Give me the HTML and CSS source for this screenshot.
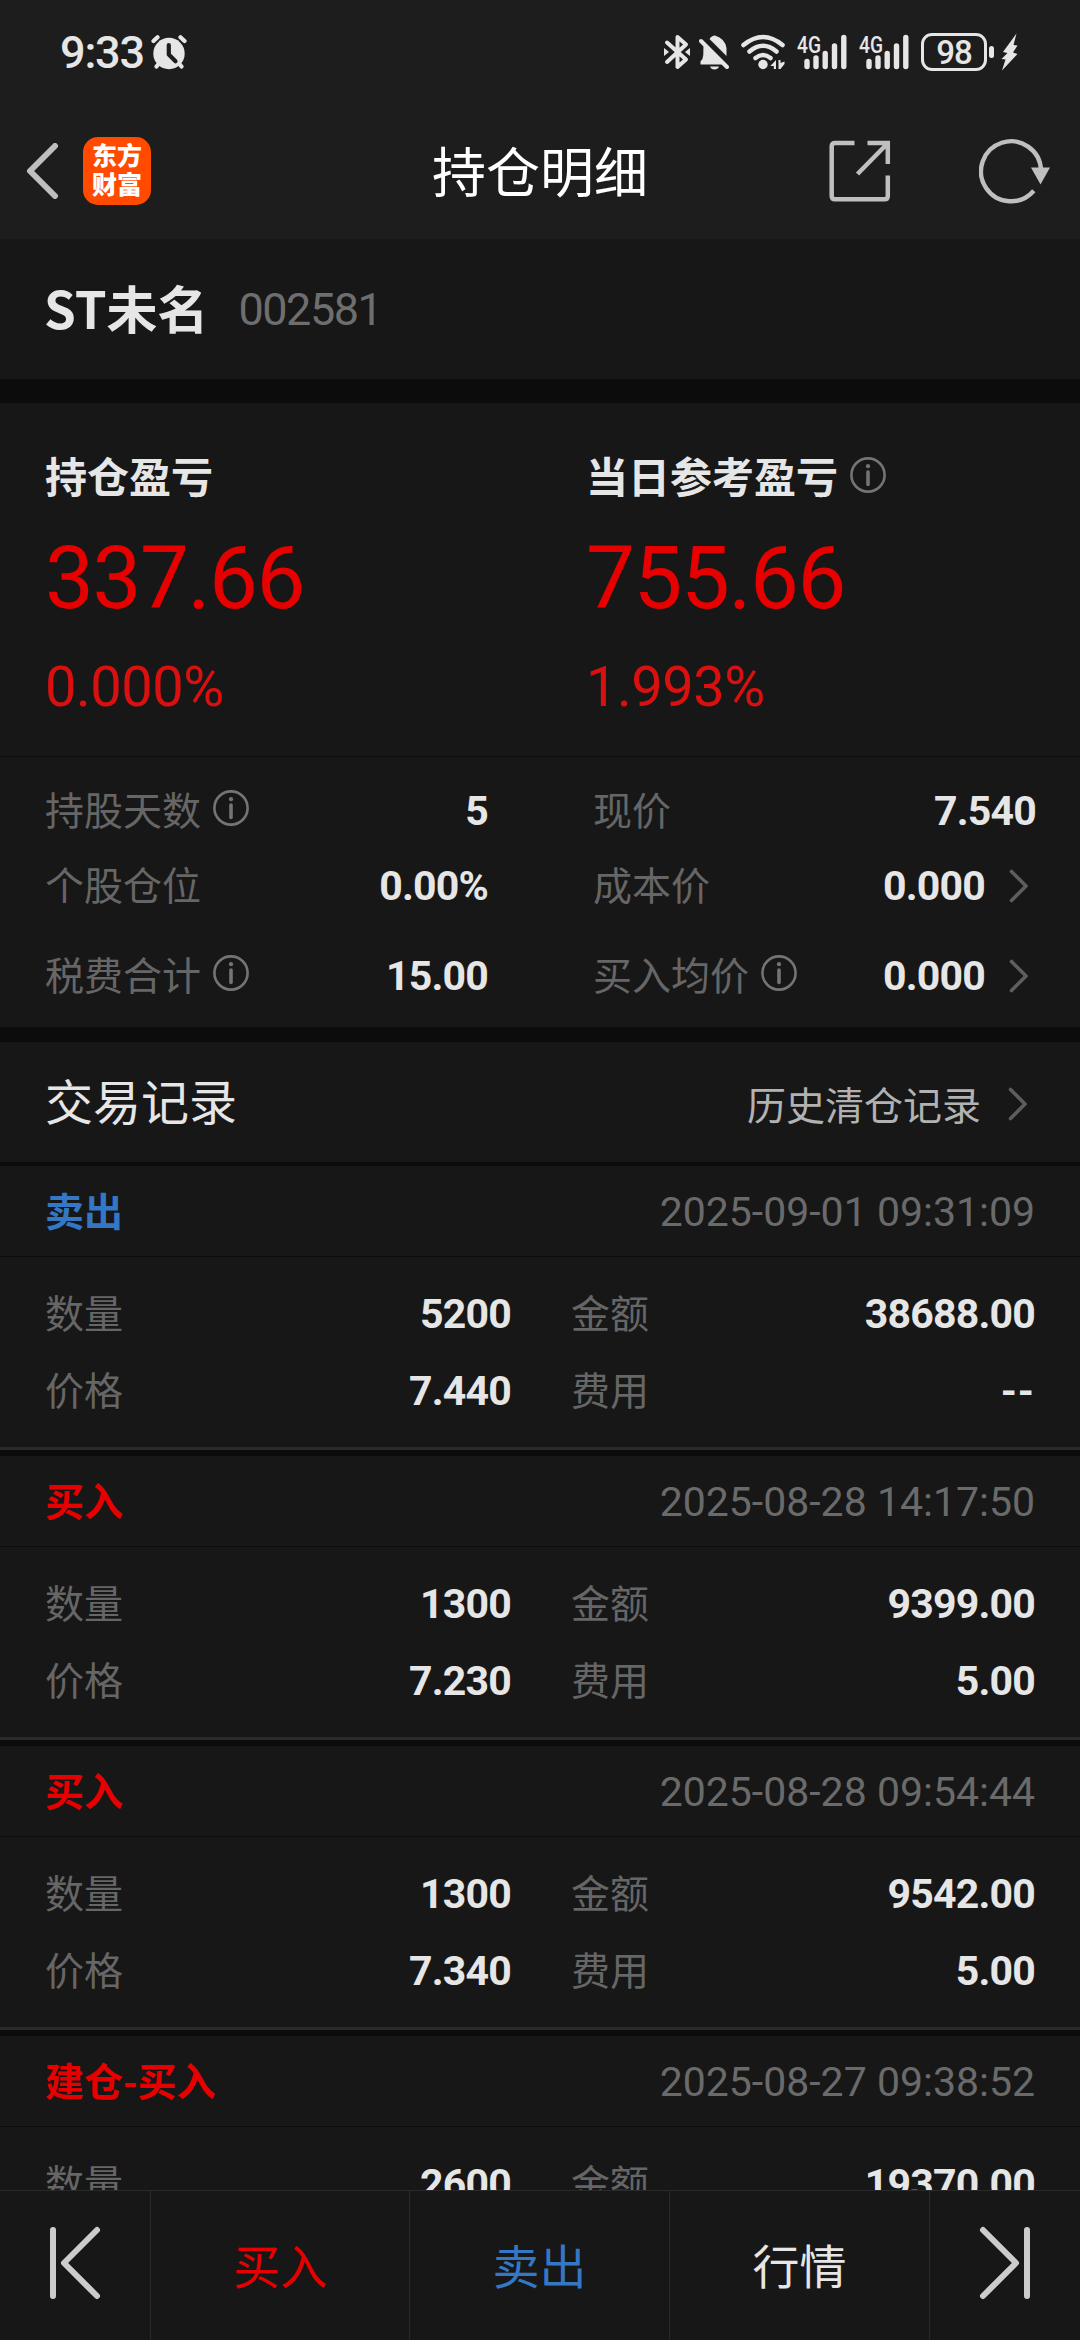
FILE: index.html
```html
<!DOCTYPE html>
<html lang="zh-CN">
<head>
  <meta charset="UTF-8">
  <meta name="viewport" content="width=device-width, initial-scale=1.0">
  <title>持仓明细</title>
  <link rel="stylesheet" href="styles.css">
</head>
<body>
  <!-- shared icons -->
  <svg class="defs" width="0" height="0">
    <symbol id="info" viewBox="0 0 36 36">
      <circle cx="18" cy="18" r="16.6" fill="none" stroke="currentColor" stroke-width="2.6"/>
      <circle cx="18" cy="9.2" r="2.1" fill="currentColor"/>
      <path d="M18 15v12.5" stroke="currentColor" stroke-width="3.6" stroke-linecap="round"/>
    </symbol>
    <symbol id="arrow" viewBox="0 0 20 34">
      <path d="M2.5 2.5L17 17L2.5 31.5" fill="none" stroke="currentColor" stroke-width="3.6" stroke-linecap="round" stroke-linejoin="round"/>
    </symbol>
  </svg>

  <div class="page">
    <div class="statusbar">
      <span class="time">9:33</span>
      <svg class="alarm" width="36" height="36" viewBox="0 0 36 36">
        <g stroke="currentColor" stroke-width="4.2" stroke-linecap="round">
          <path d="M2.5 7L6.5 3.2M33.5 7L29.5 3.2M5.5 32.5L10 27M30.5 32.5L26 27"/>
        </g>
        <circle cx="18" cy="19.5" r="15.7" fill="currentColor"/>
        <path d="M17.8 11v9.5l6.7 6.7" class="cut" stroke-width="4.2"/>
      </svg>
      <div class="status-icons">
        <svg class="bluetooth" width="26" height="36" viewBox="0 0 26 36">
          <path d="M3 8.5L22 25.5L13.500 33V3L22 10.5L3 28" fill="none" stroke="currentColor" stroke-width="4" stroke-linejoin="round" stroke-linecap="round"/>
          <path d="M0 14l5 4l-5 4zM26 14l-5 4l5 4z" fill="currentColor"/>
        </svg>
        <svg class="bell" width="30" height="36" viewBox="0 0 30 36">
          <path d="M4.500 9L25.500 30.500H1.500V27.500Q4 25.500 4.300 21zM10.500 5Q12.500 1.500 16 1.500Q26 4.500 27.500 14V22zM11 32.500h9q-1 3-4.500 3t-4.500-3z" fill="currentColor"/>
          <path d="M2 7L28 33" stroke="currentColor" stroke-width="4" stroke-linecap="round"/>
          <path d="M7 6L30 29" stroke="#1d1d1d" stroke-width="2"/>
        </svg>
        <svg class="wifi" width="44" height="36" viewBox="0 0 44 36">
          <path d="M2.5 11Q22 -5 41.500 11M8.5 17.500Q22 6 35.500 17.500M14.500 24Q22 18 29.500 24" fill="none" stroke="currentColor" stroke-width="4.5" stroke-linecap="round"/>
          <circle cx="22" cy="30.500" r="4.7" fill="currentColor"/>
          <path d="M35 26v9h-2.200v-3h-3.500zM37.500 26h2v3l4-1.500v2.500l-4 5h-2z" fill="currentColor"/>
        </svg>
        <svg class="signal" width="50" height="36" viewBox="0 0 50 36">
          <text x="0" y="18.500" textLength="24" lengthAdjust="spacingAndGlyphs">4G</text>
          <path d="M10 27.500v5M19 24v8.500M28.200 19.500v13M37.500 12v20.500M46.800 3.500v29" stroke="currentColor" stroke-width="5.4" stroke-linecap="round"/>
        </svg>
        <svg class="signal" width="50" height="36" viewBox="0 0 50 36">
          <text x="0" y="18.500" textLength="24" lengthAdjust="spacingAndGlyphs">4G</text>
          <path d="M10 27.500v5M19 24v8.500M28.200 19.500v13M37.500 12v20.500M46.800 3.500v29" stroke="currentColor" stroke-width="5.4" stroke-linecap="round"/>
        </svg>
        <div class="battery">98</div>
        <i class="battery-cap"></i>
        <svg class="bolt" width="17" height="38" viewBox="0 0 17 38">
          <path d="M15.500 0.500L2 19L6.500 20L0.500 26L4.500 26.500L1 37.500L16.500 21L12 19.500L16.500 12.500L12.500 12z" fill="currentColor"/>
        </svg>
      </div>
    </div>

    <header class="navbar">
      <svg class="back" width="33" height="56" viewBox="0 0 33 56">
        <path d="M29 3L4 28L29 53" fill="none" stroke="currentColor" stroke-width="6" stroke-linecap="round" stroke-linejoin="round"/>
      </svg>
      <div class="logo">东方<br>财富</div>
      <h1>持仓明细</h1>
      <svg class="share" width="62" height="62" viewBox="0 0 62 62">
        <path d="M25.5 3H6Q2.7 3 2.7 6.3V56Q2.7 59.300 6 59.3H55.5Q58.8 59.3 58.8 56V35.5M38.5 3H58.8V24M58 4L28.5 34" fill="none" stroke="currentColor" stroke-width="4.5"/>
      </svg>
      <svg class="refresh" width="72" height="66" viewBox="0 0 72 66">
        <path d="M54.8 52.8A30 30 0 1 1 62 32" fill="none" stroke="currentColor" stroke-width="4.4"/>
        <path d="M52 29.5H71L61.5 46.5z" fill="currentColor"/>
      </svg>
    </header>

    <main>
      <section class="stock">
        <h2>ST未名</h2>
        <span class="code">002581</span>
      </section>

      <section class="profit">
        <div class="profit-item">
          <h3>持仓盈亏</h3>
          <div class="amount">337.66</div>
          <div class="percent">0.000%</div>
        </div>
        <div class="profit-item">
          <h3>当日参考盈亏<svg class="info"><use href="#info"/></svg></h3>
          <div class="amount">755.66</div>
          <div class="percent">1.993%</div>
        </div>
      </section>

      <section class="stats">
        <div class="stat"><label>持股天数<svg class="info"><use href="#info"/></svg></label><b>5</b></div>
        <div class="stat"><label>现价</label><b>7.540</b></div>
        <div class="stat"><label>个股仓位</label><b>0.00%</b></div>
        <div class="stat"><label>成本价</label><b>0.000</b><svg class="arrow"><use href="#arrow"/></svg></div>
        <div class="stat"><label>税费合计<svg class="info"><use href="#info"/></svg></label><b>15.00</b></div>
        <div class="stat"><label>买入均价<svg class="info"><use href="#info"/></svg></label><b>0.000</b><svg class="arrow"><use href="#arrow"/></svg></div>
      </section>

      <section class="records-head">
        <h2>交易记录</h2>
        <a class="history"><span>历史清仓记录</span><svg class="arrow"><use href="#arrow"/></svg></a>
      </section>

      <section class="record">
        <div class="record-head"><strong class="sell">卖出</strong><time>2025-09-01 09:31:09</time></div>
        <div class="record-body">
          <label>数量</label><b>5200</b><label>金额</label><b>38688.00</b>
          <label>价格</label><b>7.440</b><label>费用</label><b class="none">--</b>
        </div>
      </section>
      <section class="record">
        <div class="record-head"><strong class="buy">买入</strong><time>2025-08-28 14:17:50</time></div>
        <div class="record-body">
          <label>数量</label><b>1300</b><label>金额</label><b>9399.00</b>
          <label>价格</label><b>7.230</b><label>费用</label><b>5.00</b>
        </div>
      </section>
      <section class="record">
        <div class="record-head"><strong class="buy">买入</strong><time>2025-08-28 09:54:44</time></div>
        <div class="record-body">
          <label>数量</label><b>1300</b><label>金额</label><b>9542.00</b>
          <label>价格</label><b>7.340</b><label>费用</label><b>5.00</b>
        </div>
      </section>
      <section class="record">
        <div class="record-head"><strong class="buy">建仓-买入</strong><time>2025-08-27 09:38:52</time></div>
        <div class="record-body">
          <label>数量</label><b>2600</b><label>金额</label><b>19370.00</b>
        </div>
      </section>
    </main>

    <footer class="toolbar">
      <div class="tool">
        <svg width="52" height="74" viewBox="0 0 52 74">
          <path d="M4 4V70M48 4L15 37L48 70" fill="none" stroke="currentColor" stroke-width="6" stroke-linecap="round" stroke-linejoin="round"/>
        </svg>
      </div>
      <div class="tool buy">买入</div>
      <div class="tool sell">卖出</div>
      <div class="tool">行情</div>
      <div class="tool">
        <svg width="52" height="74" viewBox="0 0 52 74">
          <path d="M48 4V70M4 4L37 37L4 70" fill="none" stroke="currentColor" stroke-width="6" stroke-linecap="round" stroke-linejoin="round"/>
        </svg>
      </div>
    </footer>
  </div>
</body>
</html>
```
FILE: styles.css
```css
* {
  box-sizing: border-box;
}
body {
  margin: 0;
  background: #0c0c0c;
  color: #e6e6e6;
  font-family: "Noto Sans CJK SC", sans-serif;
  font-size: 39px;
}
h1, h2, h3 {
  margin: 0;
}
svg {
  display: block;
  flex-shrink: 0;
}
.defs {
  position: absolute;
}
.page {
  display: flex;
  flex-direction: column;
  width: 1080px;
  height: 2340px;
  overflow: hidden;
}
.buy {
  color: #e60000;
}
.sell {
  color: #3477c4;
}
.info {
  width: 36px;
  height: 36px;
  margin-left: 12px;
  color: #747474;
}
.arrow {
  width: 20px;
  height: 34px;
  margin-left: 24px;
  margin-right: 7px;
  color: #5e5e5e;
}
.time, .code, .amount, .percent, .stat b, .record-body b, time {
  font-family: Roboto, "Noto Sans CJK SC", sans-serif;
}

/* status bar */
.statusbar {
  display: flex;
  align-items: center;
  height: 104px;
  padding: 0 62px 0 60px;
  background: #1d1d1d;
}
.time {
  width: 91px;
  padding-top: 1px;
  font-size: 45px;
  font-weight: 500;
  letter-spacing: -1.2px;
  line-height: 103px;
}
.cut {
  fill: none;
  stroke: #1d1d1d;
  stroke-linecap: round;
  stroke-linejoin: round;
}
.status-icons {
  display: flex;
  align-items: center;
  margin-left: auto;
}
.bell {
  margin-left: 9px;
}
.wifi {
  margin-left: 12px;
}
.signal {
  margin-left: 12px;
}
.signal text {
  font-family: Roboto, sans-serif;
  font-size: 24px;
  font-weight: 500;
  fill: currentColor;
}
.battery {
  width: 66px;
  height: 38px;
  margin-left: 12px;
  border: 3px solid #e6e6e6;
  border-radius: 11px;
  font: 500 33px/33px Roboto, sans-serif;
  letter-spacing: -1px;
  text-align: center;
}
.battery-cap {
  width: 5px;
  height: 12px;
  margin: 0 7px 0 2px;
  border-radius: 3px;
  background: #e6e6e6;
}

/* title bar */
.navbar {
  display: flex;
  align-items: center;
  height: 135px;
  padding: 0 29px 2px 26px;
  background: #1d1d1d;
  color: #bfbfbf;
}
.logo {
  width: 68px;
  height: 68px;
  margin-left: 24px;
  padding-top: 3px;
  border-radius: 15px;
  background: #ff4a00;
  color: #fff;
  font-size: 25px;
  font-weight: 900;
  line-height: 29px;
  text-align: center;
}
.navbar h1 {
  width: 216px;
  margin-left: 281px;
  padding-bottom: 2px;
  color: #fff;
  font-size: 54px;
  font-weight: 400;
  line-height: 80px;
}
.share {
  margin-left: 181px;
}
.refresh {
  margin-left: auto;
}

main {
  flex: 1;
  min-height: 0;
  overflow: hidden;
}
main > section {
  background: #171717;
}

.stock {
  display: flex;
  align-items: center;
  height: 140px;
  margin-bottom: 24px;
  padding-left: 44px;
}
.stock h2 {
  padding-bottom: 4px;
  font-size: 51px;
  line-height: 80px;
}
.code {
  margin-left: 30px;
  color: #6e6e6e;
  font-size: 45px;
  letter-spacing: -1.5px;
}

/* profit and loss */
.profit {
  display: grid;
  grid-template-columns: 541px 1fr;
  height: 354px;
  padding: 44px 0 0 45px;
  border-bottom: 1px solid #0c0c0c;
}
.profit h3 {
  display: flex;
  align-items: center;
  height: 60px;
  padding-bottom: 5px;
  font-size: 42px;
}
.amount {
  margin-top: 16px;
  color: #e60000;
  font-size: 87px;
  letter-spacing: -1.4px;
  line-height: 110px;
}
.percent {
  margin-top: 21px;
  color: #d81010;
  font-size: 56px;
  letter-spacing: -0.5px;
  line-height: 66px;
}

/* position details */
.stats {
  display: grid;
  grid-template-columns: 443px 443px;
  grid-template-rows: 75px 75px 105px;
  column-gap: 105px;
  height: 270px;
  margin-bottom: 15px;
  padding: 16px 0 0 45px;
}
.stat {
  display: flex;
  align-items: center;
}
.stat label {
  display: flex;
  align-items: center;
  margin-right: auto;
}
label {
  padding-bottom: 5px;
  color: #666;
}
.stat b, .record-body b {
  padding-top: 1px;
  font-size: 41px;
  letter-spacing: -0.8px;
}

/* trade records */
.records-head {
  display: flex;
  align-items: center;
  justify-content: space-between;
  height: 120px;
  margin-bottom: 4px;
  padding: 0 45px;
}
.records-head h2 {
  padding-bottom: 6px;
  font-size: 48px;
  font-weight: 400;
}
.history {
  display: flex;
  align-items: center;
  padding-top: 4px;
  color: #b2b2b2;
}
.history span {
  padding-bottom: 3px;
}
.history .arrow {
  margin-left: 27px;
}
.record {
  height: 284px;
  margin-bottom: 6px;
  border-bottom: 3px solid #2a2a2a;
}
.record-head {
  display: flex;
  align-items: center;
  justify-content: space-between;
  height: 91px;
  padding: 0 45px;
  border-bottom: 1px solid #0c0c0c;
}
.record-head strong {
  padding-bottom: 5px;
}
time {
  padding-top: 2px;
  color: #6a6a6a;
  font-size: 41px;
}
.record-body {
  display: grid;
  grid-template-columns: 100px 366px 160px 364px;
  grid-auto-rows: 77px;
  align-items: center;
  padding: 18px 45px;
}
.record-body b {
  text-align: right;
}
.record-body label:nth-child(4n+3) {
  padding-left: 60px;
}
.record-body .none {
  letter-spacing: 1px;
}

/* bottom toolbar */
.toolbar {
  display: grid;
  grid-template-columns: 151px 259px 260px 260px 150px;
  height: 150px;
  border-top: 1px solid #2a2a2a;
  background: #171717;
}
.tool {
  display: flex;
  align-items: center;
  justify-content: center;
  padding-bottom: 5px;
  border-right: 1px solid #2a2a2a;
  font-size: 47px;
}
.tool:last-child {
  border-right: 0;
}
.tool svg {
  margin-bottom: 1px;
  color: #ccc;
}
```
